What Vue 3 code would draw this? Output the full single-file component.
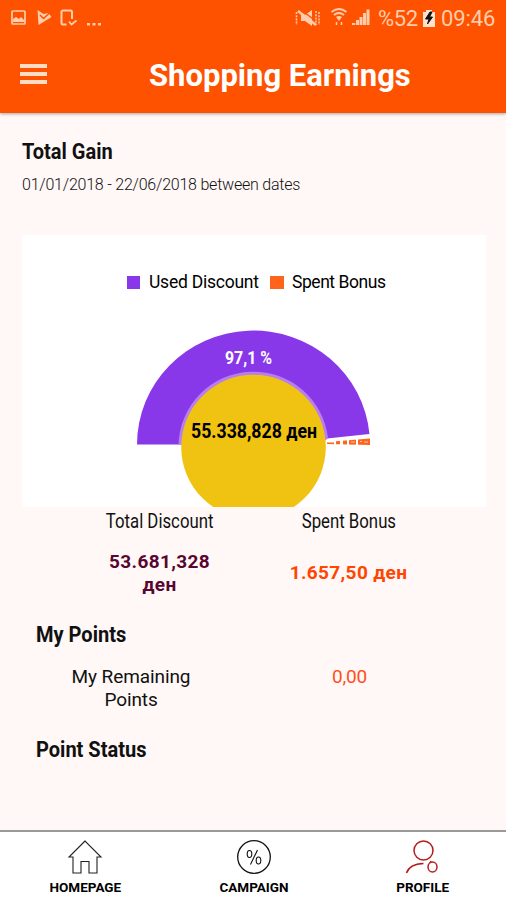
<template>
  <div class="app">
    <header class="header">
      <div class="status-bar">
        <svg class="status-left" width="110" height="36" viewBox="0 0 110 36">
          <rect x="12" y="11" width="13" height="13" rx="1" fill="none" stroke="#ffcdab" stroke-width="1.7" />
          <path d="M13 22v-3l3-2 3 2 2-2 3 3v2z" fill="#ffcdab" />
          <path d="M37.500 10l6 4 5-1 3 4-13 8z" fill="#ffcdab" />
          <path d="M40 15l3.500 3.500 6-5.500" fill="none" stroke="#ff5200" stroke-width="1.500" />
          <path d="M72 19v-7q0-1.500-1.500-1.500h-7.500q-1.500 0-1.500 1.500v11q0 1.500 1.500 1.500h3.500" fill="none" stroke="#ffcdab" stroke-width="2" />
          <path d="M69 21.500l2.500 3 5-4" fill="none" stroke="#ffcdab" stroke-width="1.800" />
          <path d="M87 23h3v2.500h-3zM92.500 23h3v2.500h-3zM98 23h3v2.500h-3z" fill="#ffcdab" />
        </svg>
        <svg class="status-right" width="80" height="36" viewBox="0 0 80 36">
          <path d="M6 15h4l7-5v16l-7-5H6z" fill="#ffcdab" />
          <path d="M5 9l17 13" stroke="#ff5200" stroke-width="1.500" />
          <path d="M3 11l18 14" stroke="#ffcdab" stroke-width="2.500" />
          <path d="M1.500 12v13M21 11v14M24 12v13" stroke="#ffcdab" stroke-width="1.500" stroke-dasharray="2 1.200" />
          <path d="M36.500 12q7.500-6 15 0M39 15q5-4 10 0" fill="none" stroke="#ffcdab" stroke-width="2" />
          <path d="M41 17q3-2 6 0l-3 4z" fill="#ffcdab" />
          <path d="M41.500 22v3M46.500 22v3" stroke="#ffcdab" stroke-width="1.500" />
          <path d="M57 23h3.300v2H57zM61 20h3v5h-3zM64.500 17h3v8h-3zM68 13h3v12h-3zM71.500 9.500h3V25h-3z" fill="#ffcdab" />
        </svg>
        <span class="battery">%52</span>
        <svg class="battery-icon" width="12" height="17" viewBox="0 0 12 17">
          <path d="M0 2h3V0h6v2h3v15H0z" fill="#ffe2cf" />
          <path d="M7 2L2.500 9H6l-1.500 5L9.500 7H6.500L9 2z" fill="#111" stroke="#111" />
        </svg>
        <span class="clock">09:46</span>
      </div>
      <div class="title-bar">
        <div class="burger"><i></i><i></i><i></i></div>
        <h1>Shopping Earnings</h1>
      </div>
    </header>

    <main class="content">
      <h2 class="gain-title">Total Gain</h2>
      <p class="dates">01/01/2018 - 22/06/2018 between dates</p>

      <svg class="chart" width="464" height="272" viewBox="22 235 464 272">
        <rect x="127" y="276" width="13" height="13" fill="#8938e9" />
        <text x="149" y="288" textLength="110" class="legend">Used Discount</text>
        <rect x="270" y="276" width="14" height="13" fill="#ff641c" />
        <text x="292" y="288" textLength="94" class="legend">Spent Bonus</text>

        <path d="M137 444.500A116.500 114 0 0 1 369.500 434L327 438.500L320 444.500z" fill="#8938e9" />
        <path d="M178.500 444.500A75 75 0 0 1 328 438.300L320 444.500z" fill="#b77eee" />
        <path d="M327 442L370 438.500V445L327 444z" fill="#ff641c" />
        <path d="M327 439.500h8v3h-8zM334 440h2v5h-2zM340 438h3v7h-3zM347 438h2v8h-2zM356 438h2v8h-2z" fill="#fff" />
        <path d="M351 442h4M360 441.500h2M364 442h4" stroke="#ffc9ad" />
        <circle cx="253.500" cy="447" r="72.300" fill="#f0c312" />
        <text x="225" y="364" textLength="47" lengthAdjust="spacingAndGlyphs" class="percent">97,1 %</text>
        <text x="191" y="437.500" textLength="126" lengthAdjust="spacingAndGlyphs" class="total">55.338,828 ден</text>
      </svg>

      <section class="summary">
        <div class="summary-item">
          <h3 class="narrow">Total Discount</h3>
          <b class="discount">53.681,328<br />ден</b>
        </div>
        <div class="summary-item">
          <h3 class="narrow">Spent Bonus</h3>
          <b class="bonus">1.657,50 ден</b>
        </div>
      </section>

      <h2 class="section-title">My Points</h2>
      <div class="points">
        <span class="points-label">My Remaining Points</span>
        <span class="points-value">0,00</span>
      </div>
      <h2 class="section-title">Point Status</h2>
    </main>

    <nav class="tabs">
      <a v-for="tab in tabs" :key="tab.id" class="tab">
        <svg width="36" height="36" viewBox="0 0 36 36" fill="none" stroke-width="1.100">
          <path v-if="tab.id === 'home'" d="M18 1L2 17h4v16h8V21.500h8V33h8V17h4z" stroke="#222" />
          <g v-else-if="tab.id === 'campaign'" stroke="#111">
            <circle cx="18" cy="17" r="16.300" stroke-width="1.300" />
            <ellipse cx="13.500" cy="14" rx="2.300" ry="3.500" />
            <ellipse cx="22.500" cy="20.500" rx="2.300" ry="3.500" />
            <path d="M21.500 10l-7 14.500" />
          </g>
          <g v-else stroke="#b51d1d" stroke-width="1.500">
            <circle cx="18.500" cy="10.500" r="9.500" />
            <path d="M1.500 33q3-9 17-9.500M26 21l-1 2" />
            <ellipse cx="27.500" cy="27" rx="4.500" ry="5" />
          </g>
        </svg>
        <span>{{ tab.label }}</span>
      </a>
    </nav>
  </div>
</template>

<script setup>
const tabs = [
  { id: 'home', label: 'HOMEPAGE' },
  { id: 'campaign', label: 'CAMPAIGN' },
  { id: 'profile', label: 'PROFILE' }
]
</script>

<style>
body {
  margin: 0;
}
</style>

<style scoped>
.app {
  display: flex;
  flex-direction: column;
  width: 506px;
  height: 900px;
  overflow: hidden;
  background: #fff8f7;
  color: #111;
  font-family: Roboto, "Liberation Sans", sans-serif;
}

h1,
h2,
h3,
p {
  margin: 0;
}

.header {
  height: 113px;
  flex: none;
  background: #ff5200;
  box-shadow: 0 1px 3px rgba(0, 0, 0, 0.35);
}

.status-bar {
  display: flex;
  align-items: center;
  height: 36px;
  color: #ffcdab;
  font-size: 22px;
}

.status-right {
  margin-left: 185px;
}

.battery {
  width: 45px;
  margin-left: 3px;
  letter-spacing: -0.4px;
}

.clock {
  margin-left: 6px;
  letter-spacing: -0.1px;
}

.title-bar {
  display: flex;
  align-items: center;
  height: 76px;
  padding-left: 20px;
}

.burger {
  display: grid;
  gap: 4px;
  width: 27px;
  margin-right: 102px;
}

.burger i {
  height: 4px;
  background: #ffdcc4;
}

h1 {
  padding-top: 3px;
  color: #fff;
  font-size: 31px;
  line-height: 36px;
}

.content {
  flex: 1;
  padding-left: 22px;
}

.gain-title {
  margin-top: 25px;
}

h2 {
  width: max-content;
  font-size: 22px;
  line-height: 28px;
  transform: scaleX(0.91);
  transform-origin: left;
}

.dates {
  width: max-content;
  margin-top: 9px;
  font-size: 16px;
  font-weight: 300;
  line-height: 20px;
  letter-spacing: -0.22px;
}

.chart {
  display: block;
  margin-top: 40px;
  background: #fff;
}

.legend {
  font-size: 17.5px;
}

.percent {
  fill: #fff;
  font-size: 19px;
  font-weight: 700;
}

.total {
  font-size: 20px;
  font-weight: 700;
}

.summary {
  display: grid;
  grid-template-columns: 189px 189px;
  margin-left: 43px;
  height: 99px;
}

.summary-item {
  display: flex;
  flex-direction: column;
  align-items: center;
  text-align: center;
}

h3 {
  padding-top: 1px;
  font-size: 19.5px;
  font-weight: 400;
  line-height: 28px;
}

.narrow {
  transform: scaleX(0.86);
}

.summary b {
  font-size: 19px;
  line-height: 23px;
  letter-spacing: 0.35px;
}

.discount {
  margin-top: 14px;
  color: #58062f;
}

.bonus {
  margin-top: 25px;
  color: #ff4500;
}

.section-title {
  margin: 15px 0 0 14px;
}

.points {
  display: flex;
  height: 56px;
  margin-top: 16px;
  padding-left: 39px;
}

.points-label {
  width: 140px;
  text-align: center;
  font-size: 19px;
  line-height: 23px;
  letter-spacing: -0.1px;
}

.points-value {
  margin-left: 131px;
  color: #ff4f1a;
  font-size: 19px;
  line-height: 23px;
  letter-spacing: -0.2px;
}

.tabs {
  display: grid;
  grid-template-columns: repeat(3, 1fr);
  height: 68px;
  flex: none;
  border-top: 2px solid #999;
  background: #fff;
}

.tab {
  display: flex;
  flex-direction: column;
  align-items: center;
  padding: 8px 0 0 2px;
  color: #000;
  font-size: 13.5px;
  font-weight: 700;
  line-height: 22px;
}
</style>
